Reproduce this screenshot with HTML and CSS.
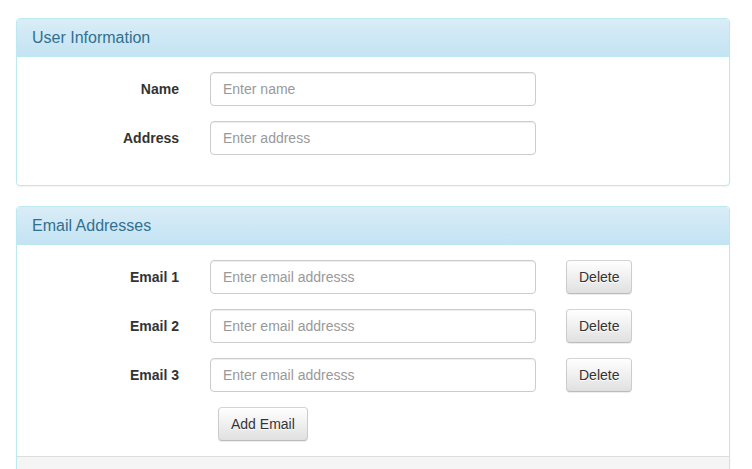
FILE: index.html
```html
<!DOCTYPE html>
<html>
<head>
<meta charset="utf-8">
<link rel="stylesheet" href="styles.css">
</head>
<body>
<div class="page">
  <div class="panel">
    <div class="panel-heading">User Information</div>
    <div class="panel-body">
      <div class="form-group">
        <label class="col-label">Name</label>
        <div class="col-input"><input class="form-control" type="text" placeholder="Enter name"></div>
      </div>
      <div class="form-group">
        <label class="col-label">Address</label>
        <div class="col-input"><input class="form-control" type="text" placeholder="Enter address"></div>
      </div>
    </div>
  </div>

  <div class="panel last-panel">
    <div class="panel-heading">Email Addresses</div>
    <div class="panel-body">
      <div class="form-group">
        <label class="col-label">Email 1</label>
        <div class="col-input"><input class="form-control" type="text" placeholder="Enter email addresss"></div>
        <div class="col-action"><button class="btn">Delete</button></div>
      </div>
      <div class="form-group">
        <label class="col-label">Email 2</label>
        <div class="col-input"><input class="form-control" type="text" placeholder="Enter email addresss"></div>
        <div class="col-action"><button class="btn">Delete</button></div>
      </div>
      <div class="form-group">
        <label class="col-label">Email 3</label>
        <div class="col-input"><input class="form-control" type="text" placeholder="Enter email addresss"></div>
        <div class="col-action"><button class="btn">Delete</button></div>
      </div>
      <div class="form-group last">
        <div class="col-input offset"><button class="btn add">Add Email</button></div>
      </div>
    </div>
    <div class="panel-footer"></div>
  </div>
</div>
</body>
</html>
```

FILE: styles.css
```css
* { box-sizing: border-box; }
html, body { margin: 0; padding: 0; background: #fff; }
body {
  font-family: "Liberation Sans", Arial, sans-serif;
  font-size: 14px;
  line-height: 1.42857;
  color: #333;
}
.page {
  padding: 18px 22px 0 16px;
}
.panel {
  border: 1px solid #bce8f1;
  border-radius: 4px;
  background: #fff;
  margin-bottom: 20px;
  box-shadow: 0 1px 2px rgba(0,0,0,.05);
  overflow: hidden;
}
.panel.last-panel { margin-bottom: 0; }
.panel-heading {
  padding: 10px 15px;
  font-size: 16px;
  line-height: 17px;
  color: #31708f;
  background: linear-gradient(to bottom, #d9edf7 0%, #c4e3f3 100%);
  border-bottom: 1px solid #bce8f1;
  border-radius: 3px 3px 0 0;
}
.panel-body {
  padding: 15px 0;
}
.panel-footer {
  background: #f5f5f5;
  border-top: 1px solid #ddd;
  height: 24px;
}
.form-group {
  display: grid;
  grid-template-columns: 3fr 6fr 3fr;
  margin-bottom: 15px;
}
.form-group.last { margin-bottom: 0; }
.col-label {
  grid-column: 1;
  padding: 7px 16px 0 15px;
  text-align: right;
  font-weight: bold;
  line-height: 20px;
}
.col-input {
  grid-column: 2;
  padding: 0 15px;
}
.col-input.offset { padding-left: 23px; }
.col-action {
  grid-column: 3;
  padding: 0 15px;
}
.form-control {
  display: block;
  width: 100%;
  height: 34px;
  padding: 6px 12px;
  font-family: inherit;
  font-size: 14px;
  line-height: 20px;
  color: #555;
  background: #fff;
  border: 1px solid #ccc;
  border-radius: 4px;
  box-shadow: inset 0 1px 1px rgba(0,0,0,.075);
  outline: none;
}
.form-control::placeholder { color: #999; }
.btn {
  display: inline-block;
  height: 34px;
  padding: 6px 12px;
  font-family: inherit;
  font-size: 14px;
  line-height: 20px;
  color: #333;
  background: linear-gradient(to bottom, #fff 0%, #e0e0e0 100%);
  border: 1px solid #ccc;
  border-color: #d4d4d4 #ccc #bbb;
  border-radius: 4px;
  text-shadow: 0 1px 0 #fff;
  box-shadow: inset 0 1px 0 rgba(255,255,255,.15), 0 1px 1px rgba(0,0,0,.075);
  cursor: pointer;
}
```
